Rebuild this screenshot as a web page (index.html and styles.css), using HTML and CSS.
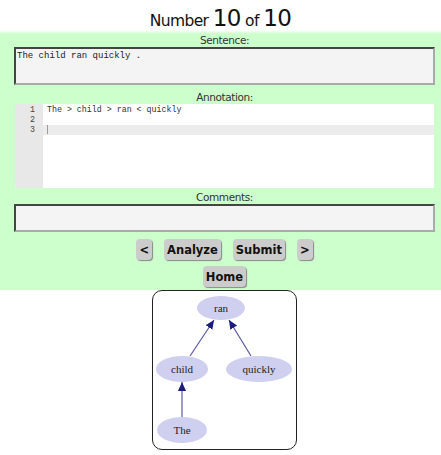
FILE: index.html
```html
<!DOCTYPE html>
<html lang="en">
<head>
    <meta charset="UTF-8">
    <title>Annotate</title>
    <link rel="stylesheet" href="styles.css">
</head>
<body>
    <div class="title">Number <span class="big">10</span> of <span class="big">10</span></div>
    <div class="panel">
        <div class="label">Sentence:</div>
        <div class="sentence">The child ran quickly .</div>
        <div class="label">Annotation:</div>
        <div class="editor">
            <div class="gutter">
                <div>1</div>
                <div>2</div>
                <div>3</div>
            </div>
            <div class="lines">
                <div class="line">The &gt; child &gt; ran &lt; quickly</div>
                <div class="line"></div>
                <div class="line active"><span class="cursor"></span></div>
            </div>
        </div>
        <div class="label">Comments:</div>
        <div class="comments"></div>
        <div class="buttons">
            <button class="btn">&lt;</button>
            <button class="btn">Analyze</button>
            <button class="btn">Submit</button>
            <button class="btn">&gt;</button>
        </div>
        <div class="buttons home-row">
            <button class="btn">Home</button>
        </div>
    </div>
    <div class="graph">
        <svg width="143" height="158" viewBox="0 0 143 158">
            <defs>
                <marker id="arrow" markerWidth="10" markerHeight="10" refX="9" refY="4.5" orient="auto" markerUnits="userSpaceOnUse">
                    <path d="M0,0.5 L9,4.5 L0,8.5 Z" fill="#1c1c80"/>
                </marker>
            </defs>
            <g stroke="#5858a8" stroke-width="1.2">
                <line x1="37" y1="65" x2="61" y2="29" marker-end="url(#arrow)"/>
                <line x1="98" y1="65" x2="76" y2="29" marker-end="url(#arrow)"/>
                <line x1="29" y1="126" x2="29" y2="91" marker-end="url(#arrow)"/>
            </g>
            <g fill="#cfcff0">
                <ellipse cx="68" cy="17" rx="24" ry="12"/>
                <ellipse cx="29" cy="78" rx="26" ry="13"/>
                <ellipse cx="106" cy="78" rx="33" ry="13"/>
                <ellipse cx="29" cy="139" rx="25" ry="13"/>
            </g>
            <g class="node-text" text-anchor="middle">
                <text x="68" y="21">ran</text>
                <text x="29" y="82">child</text>
                <text x="106" y="82">quickly</text>
                <text x="29" y="143">The</text>
            </g>
        </svg>
    </div>
</body>
</html>
```

FILE: styles.css
```css
body {
    margin: 0;
    font-family: "DejaVu Sans", Verdana, sans-serif;
    color: #222;
    background: #fff;
}
.title {
    height: 30px;
    text-align: center;
    font-size: 15.5px;
    line-height: 36px;
    color: #111;
    letter-spacing: -0.6px;
}
.title .big {
    font-size: 23px;
}
.panel {
    background: linear-gradient(to bottom, #ffffff 0px, #ccffcc 4px);
    padding: 3px 6px 3px 14px;
}
.label {
    text-align: center;
    font-size: 10.5px;
    line-height: 14px;
    color: #333;
    letter-spacing: -0.4px;
}
.sentence {
    height: 34px;
    background: #f4f4f4;
    border: 2px solid #555;
    border-color: #444 #aaa #aaa #444;
    font-family: "Liberation Mono", monospace;
    font-size: 9px;
    padding: 0 1px;
    line-height: 14px;
    color: #222;
    margin-bottom: 5px;
}
.editor {
    display: flex;
    height: 84px;
    margin: 0 1px 2px 1px;
    background: #fff;
    font-family: "Liberation Mono", monospace;
    font-size: 8.3px;
    line-height: 10px;
}
.gutter {
    width: 20px;
    padding: 1px 8px 0 0;
    background: #e8e8e8;
    color: #444;
    text-align: right;
}
.lines {
    flex: 1;
    padding-top: 1px;
}
.line {
    height: 10px;
    padding-left: 4px;
    color: #333;
}
.line.active {
    background: #ececec;
}
.cursor {
    display: inline-block;
    width: 1px;
    height: 9px;
    background: #999;
    vertical-align: top;
}
.comments {
    height: 24px;
    background: #f4f4f4;
    border: 2px solid #555;
    border-color: #444 #aaa #aaa #444;
    margin-bottom: 7px;
}
.buttons {
    display: flex;
    justify-content: center;
    gap: 12px;
}
.home-row {
    margin-top: 6px;
}
.btn {
    font-family: "DejaVu Sans", Verdana, sans-serif;
    font-weight: bold;
    font-size: 11.5px;
    height: 21px;
    padding: 0 3px;
    border: none;
    border-radius: 4px;
    background: #cccccc;
    color: #111;
    box-shadow: 1px 1px 1px #888;
    cursor: pointer;
}
.graph {
    width: 143px;
    height: 158px;
    margin: 0 auto;
    border: 1.5px solid #222;
    border-radius: 10px;
    position: relative;
    left: 4px;
}
.graph svg {
    display: block;
}
.node-text {
    font-family: "Liberation Serif", serif;
    font-size: 11px;
    fill: #222;
}
```
